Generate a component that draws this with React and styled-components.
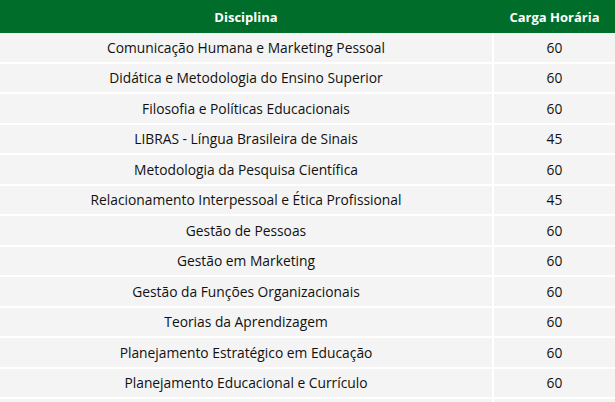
import React from 'react';
import styled, { createGlobalStyle } from 'styled-components';

const GlobalStyle = createGlobalStyle`
  html, body {
    margin:0;
    padding:0;
    background:#fff;
    overflow:hidden;
  }
  body {
    font-family:"Open Sans", "Liberation Sans", sans-serif;
  }
`;

const Table = styled.div`
  width:615px;
  display:grid;
  grid-template-columns:492px 1fr;
`;

const HeadCell = styled.div`
  height:33px;
  background:#006d2b;
  color:#fff;
  font-size:13px;
  font-weight:700;
  display:flex;
  align-items:center;
  justify-content:center;
  border-left:${p => (p.$right ? '2px solid #006d2b' : '0')};
`;

const Cell = styled.div`
  height:28.5px;
  background:#f4f4f4;
  color:#111;
  font-size:13.8px;
  font-weight:500;
  display:flex;
  align-items:center;
  justify-content:center;
  border-bottom:2px solid #fff;
  border-left:${p => (p.$right ? '2px solid #fff' : '0')};
`;

const rows = [
  ['Comunicação Humana e Marketing Pessoal', 60],
  ['Didática e Metodologia do Ensino Superior', 60],
  ['Filosofia e Políticas Educacionais', 60],
  ['LIBRAS - Língua Brasileira de Sinais', 45],
  ['Metodologia da Pesquisa Científica', 60],
  ['Relacionamento Interpessoal e Ética Profissional', 45],
  ['Gestão de Pessoas', 60],
  ['Gestão em Marketing', 60],
  ['Gestão da Funções Organizacionais', 60],
  ['Teorias da Aprendizagem', 60],
  ['Planejamento Estratégico em Educação', 60],
  ['Planejamento Educacional e Currículo', 60],
  ['', ''],
];

export default function App() {
  return (
    <>
      <GlobalStyle />
      <Table>
        <HeadCell>Disciplina</HeadCell>
        <HeadCell $right>Carga Horária</HeadCell>
        {rows.map((r, i) => (
          <React.Fragment key={i}>
            <Cell>{r[0]}</Cell>
            <Cell $right>{r[1]}</Cell>
          </React.Fragment>
        ))}
      </Table>
    </>
  );
}
